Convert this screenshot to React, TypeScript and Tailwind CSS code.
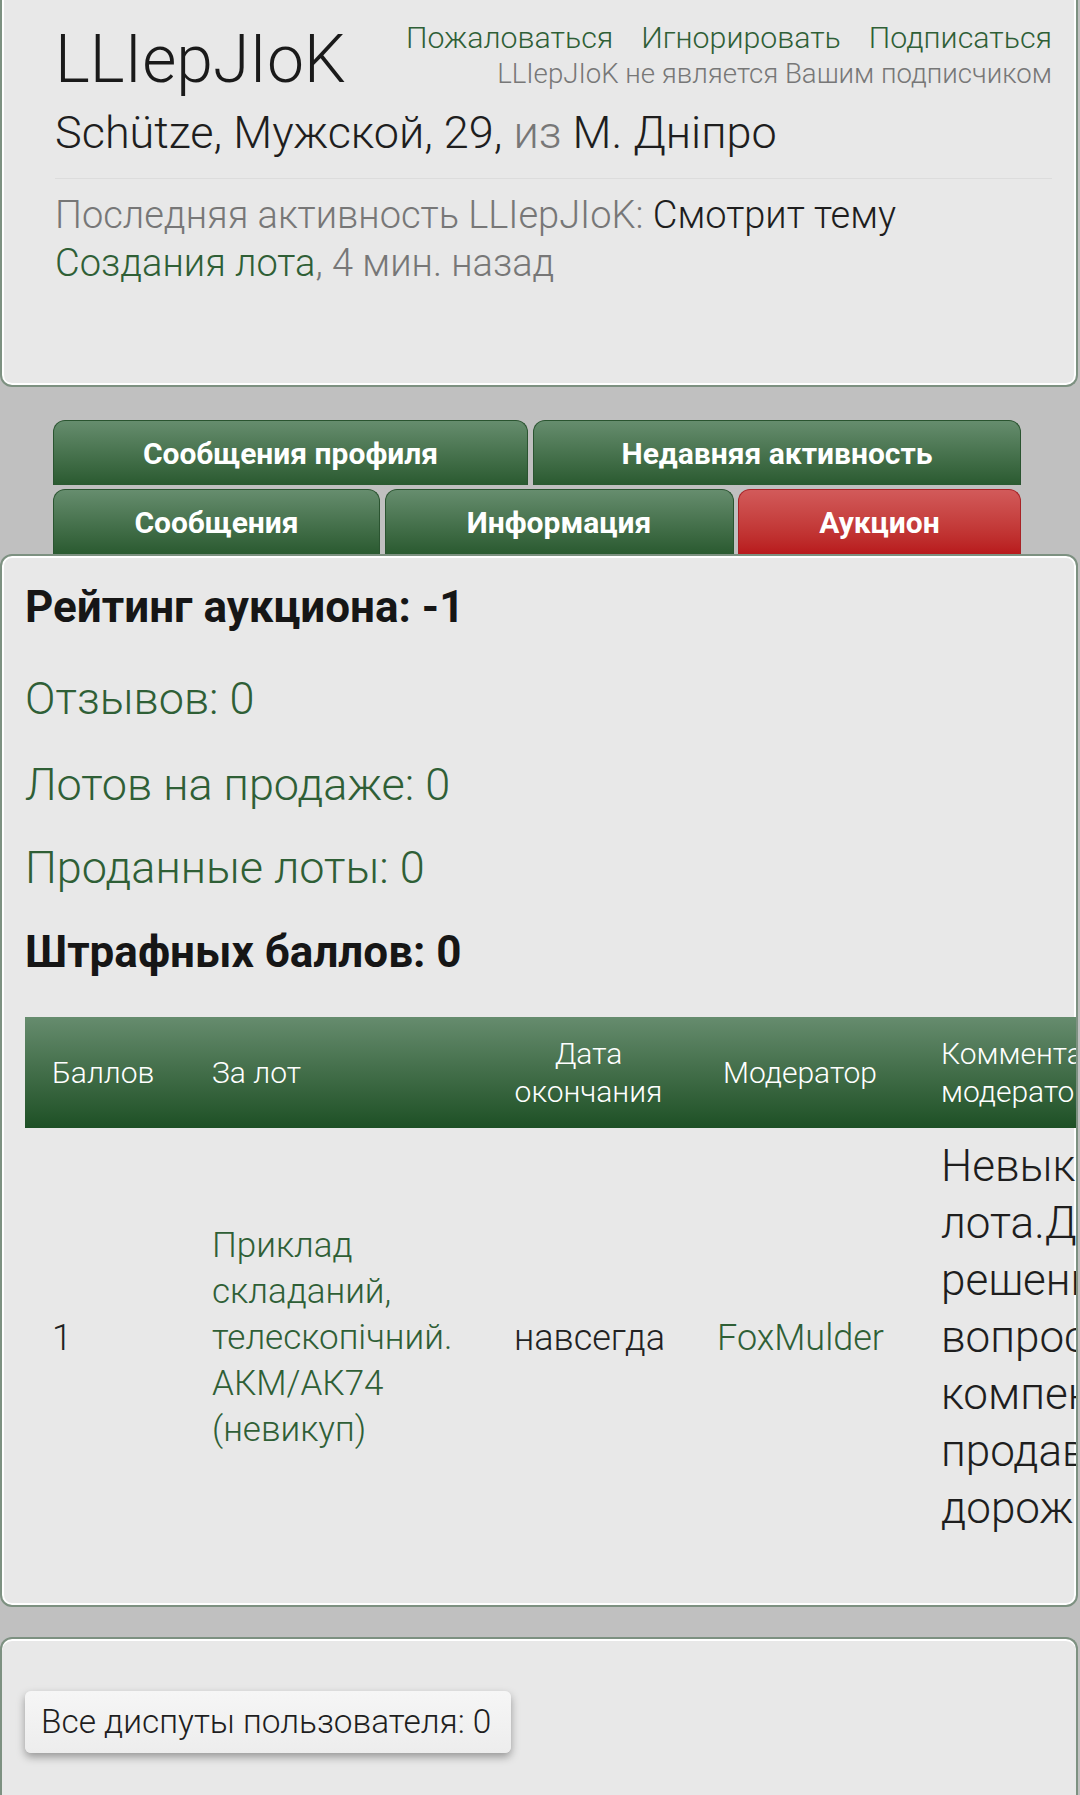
import React from "react";

const green = "text-[#2f5f36]";

function Tab({ label, w, red }: { label: string; w: string; red?: boolean }) {
  return (
    <div
      className={`${w} h-[65px] flex items-center justify-center rounded-t-[12px] border border-b-0 text-white font-bold text-[30px] ${
        red
          ? "bg-linear-to-b from-[#d25a5a] to-[#b8191c] border-[#a82226]"
          : "bg-linear-to-b from-[#668d6e] to-[#2a5a30] border-[#2a5430]"
      }`}
    >
      {label}
    </div>
  );
}

export default function App() {
  return (
    <div className="min-h-[1795px] w-[1080px] bg-[#c0c0c0] font-[Roboto,sans-serif] overflow-hidden">
      {/* Profile card */}
      <div className="mr-[2px] bg-[#e8e8e8] border-2 border-t-0 border-[#7d9181] rounded-b-[12px] shadow-[inset_0_-2px_0_#ffffff,inset_2px_0_0_#ffffff,inset_-2px_0_0_#ffffff] pl-[53px] pr-[24px] pt-[20px] pb-[98px]">
        <div className="flex justify-between items-start">
          <div className="text-[66px] leading-[80px] font-light text-[#1a1a1a]">LLIepJIoK</div>
          <div className="text-right">
            <div className={`flex justify-end gap-[28px] text-[30.3px] leading-[36px] font-light ${green}`}>
              <span>Пожаловаться</span>
              <span>Игнорировать</span>
              <span>Подписаться</span>
            </div>
            <div className="mt-[3px] text-[27.6px] leading-[30px] font-light text-[#777777]">
              LLIepJIoK не является Вашим подписчиком
            </div>
          </div>
        </div>
        <div className="mt-[7px] text-[45px] leading-[52px] font-light text-[#1e1e1e]">
          Schütze, Мужской, 29, <span className="text-[#777777]">из</span> М. Дніпро
        </div>
        <div className="mt-[19px] h-px bg-[#dcdcdc]" />
        <div className="mt-[12px] text-[38px] leading-[48px] font-light text-[#777777]">
          Последняя активность LLIepJIoK: <span className="text-[#1e1e1e]">Смотрит тему</span>{" "}
          <span className={green}>Создания лота</span>, 4 мин. назад
        </div>
      </div>

      {/* Tabs */}
      <div className="pt-[33px] pl-[53px]">
        <div className="flex gap-[5px]">
          <Tab label="Сообщения профиля" w="w-[475px]" />
          <Tab label="Недавняя активность" w="w-[488px]" />
        </div>
        <div className="flex gap-[4.5px] mt-[4px]">
          <Tab label="Сообщения" w="w-[327px]" />
          <Tab label="Информация" w="w-[349px]" />
          <Tab label="Аукцион" w="w-[283px]" red />
        </div>
      </div>

      {/* Auction card */}
      <div className="mr-[2px] bg-[#e8e8e8] border-2 border-[#7d9181] rounded-[12px] overflow-hidden shadow-[inset_0_0_0_2px_#ffffff] pt-[25px] pl-[23px] pb-[58px]">
        <div className="text-[44px] leading-[52px] font-bold text-[#161616]">Рейтинг аукциона: -1</div>
        <div className={`mt-[40px] text-[45px] leading-[52px] font-light ${green}`}>Отзывов: 0</div>
        <div className={`mt-[34px] text-[45px] leading-[52px] font-light ${green}`}>Лотов на продаже: 0</div>
        <div className={`mt-[31px] text-[45px] leading-[52px] font-light ${green}`}>Проданные лоты: 0</div>
        <div className="mt-[32px] text-[44px] leading-[52px] font-bold text-[#161616]">Штрафных баллов: 0</div>

        <div className="mt-[39px] w-[1223px]">
          <div className="flex items-center h-[111px] bg-linear-to-b from-[#668c6e] to-[#1d5025] text-white font-light text-[30px] leading-[38px]">
            <div className="w-[160px] shrink-0 pl-[27px]">Баллов</div>
            <div className="w-[302px] shrink-0 pl-[27px]">За лот</div>
            <div className="w-[203px] shrink-0 px-[27px] text-center">
              Дата
              <br />
              окончания
            </div>
            <div className="w-[222px] shrink-0 pl-[27px] pr-[29px] text-center">Модератор</div>
            <div className="w-[336px] shrink-0 pl-[29px] pr-[27px]">
              Комментарий
              <br />
              модератора
            </div>
          </div>
          <div className="flex items-center font-light">
            <div className="w-[160px] shrink-0 pl-[27px] text-[36px] text-[#222222]">1</div>
            <div className={`w-[302px] shrink-0 pl-[27px] pr-[25px] text-[35px] leading-[46px] ${green}`}>
              Приклад складаний, телескопічний. АКМ/АК74 (невикуп)
            </div>
            <div className="w-[203px] shrink-0 pl-[27px] text-[36px] text-[#222222]">навсегда</div>
            <div className={`w-[222px] shrink-0 pl-[27px] text-[36px] ${green}`}>FoxMulder</div>
            <div className="w-[336px] shrink-0 pl-[29px] pr-[27px] py-[10px] text-[44px] leading-[57px] text-[#1e1e1e]">
              Невыкуп лота.Для решения вопроса компенсации продавцу дорожных
            </div>
          </div>
        </div>
      </div>

      {/* Disputes card */}
      <div className="mt-[30px] mr-[2px] min-h-[200px] bg-[#e8e8e8] border-2 border-b-0 border-[#7d9181] rounded-t-[12px] shadow-[inset_0_2px_0_#ffffff] pt-[52px] pl-[23px]">
        <div className="inline-flex items-center h-[62px] pl-[16px] pr-[20px] rounded-[6px] bg-linear-to-b from-[#f6f6f6] to-[#ededed] shadow-[0_4px_8px_rgba(0,0,0,0.35)] text-[33.4px] font-light text-[#1e1e1e]">
          Все диспуты пользователя: 0
        </div>
      </div>
    </div>
  );
}
